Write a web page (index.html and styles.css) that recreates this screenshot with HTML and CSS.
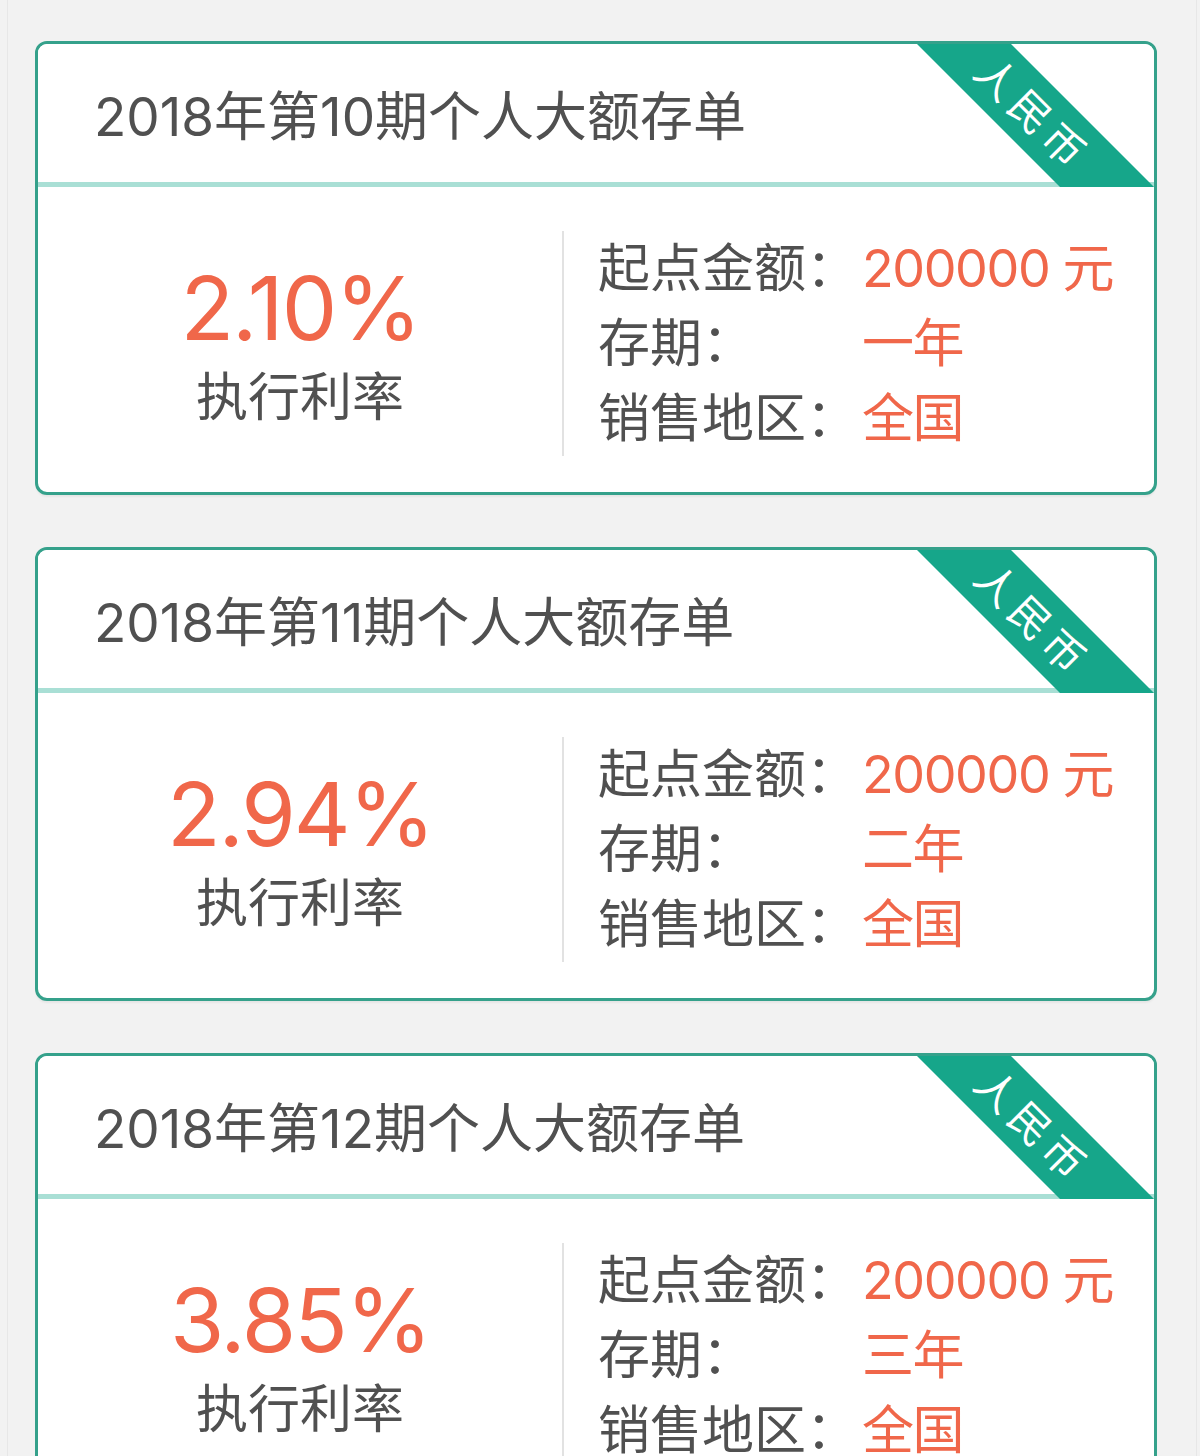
FILE: index.html
```html
<!DOCTYPE html>
<html lang="zh-CN">
<head>
<meta charset="utf-8">
<title>个人大额存单</title>
<link rel="stylesheet" href="styles.css">
</head>
<body>
<div class="page">
  <section class="card">
    <div class="card-top">
      <h2 class="card-title">2018年第10期个人大额存单</h2>
      <div class="ribbon"></div>
      <span class="ribbon-text">人民币</span>
    </div>
    <div class="card-body">
      <div class="rate">
        <div class="rate-value">2.10%</div>
        <div class="rate-label">执行利率</div>
      </div>
      <div class="info">
        <span class="info-label">起点金额：</span><span class="info-value">200000 元</span>
        <span class="info-label">存期：</span><span class="info-value">一年</span>
        <span class="info-label">销售地区：</span><span class="info-value">全国</span>
      </div>
    </div>
  </section>

  <section class="card">
    <div class="card-top">
      <h2 class="card-title">2018年第11期个人大额存单</h2>
      <div class="ribbon"></div>
      <span class="ribbon-text">人民币</span>
    </div>
    <div class="card-body">
      <div class="rate">
        <div class="rate-value">2.94%</div>
        <div class="rate-label">执行利率</div>
      </div>
      <div class="info">
        <span class="info-label">起点金额：</span><span class="info-value">200000 元</span>
        <span class="info-label">存期：</span><span class="info-value">二年</span>
        <span class="info-label">销售地区：</span><span class="info-value">全国</span>
      </div>
    </div>
  </section>

  <section class="card">
    <div class="card-top">
      <h2 class="card-title">2018年第12期个人大额存单</h2>
      <div class="ribbon"></div>
      <span class="ribbon-text">人民币</span>
    </div>
    <div class="card-body">
      <div class="rate">
        <div class="rate-value">3.85%</div>
        <div class="rate-label">执行利率</div>
      </div>
      <div class="info">
        <span class="info-label">起点金额：</span><span class="info-value">200000 元</span>
        <span class="info-label">存期：</span><span class="info-value">三年</span>
        <span class="info-label">销售地区：</span><span class="info-value">全国</span>
      </div>
    </div>
  </section>
</div>
</body>
</html>
```

FILE: styles.css
```css
html, body {
  margin: 0;
  padding: 0;
  background: #f2f2f2;
}

body {
  font-family: "Inter", "Noto Sans CJK SC", "Noto Sans", sans-serif;
  color: #505050;
}

.page {
  margin: 0 3px 0 7px;
  border-left: 1px solid #e7e7e7;
  border-right: 1px solid #e7e7e7;
  padding: 41px 39px 0 27px;
  min-height: 1456px;
  box-sizing: border-box;
}

/* product card */
.card {
  background: #fff;
  border: 3px solid #35a18b;
  border-radius: 12px;
  overflow: hidden;
  margin-bottom: 52px;
  box-shadow: 0 3px 2px -1px rgba(0, 0, 0, 0.05);
}

.card-top {
  position: relative;
  height: 143px;
  display: flex;
  align-items: center;
  padding-top: 8px;
  padding-bottom: 5px;
  box-sizing: border-box;
  background: linear-gradient(to top, #a9dfd5 5px, #fff 5px);
}

.card-title {
  margin: 0;
  padding-left: 56px;
  font-size: 53px;
  font-weight: 400;
  line-height: 1;
  color: #505050;
}

/* diagonal currency band across the top-right corner */
.ribbon {
  position: absolute;
  inset: 0;
  background: #16a68a;
  clip-path: polygon(calc(100% - 237px) 0, calc(100% - 143px) 0, 100% 143px, 100% 100%, calc(100% - 94px) 100%);
}

.ribbon-text {
  position: absolute;
  top: 66px;
  right: 122px;
  transform: translate(50%, -50%) rotate(45deg);
  font-family: "Noto Sans CJK SC", sans-serif;
  color: #fff;
  font-size: 41px;
  line-height: 0.9;
  letter-spacing: 6px;
  padding-left: 6px;
  white-space: nowrap;
}

.card-body {
  display: grid;
  grid-template-columns: 524px 1fr;
  padding: 44px 0 36px;
}

.rate {
  display: flex;
  flex-direction: column;
  align-items: center;
  justify-content: center;
}

.rate-value {
  font-size: 88px;
  line-height: 1;
  letter-spacing: -2px;
  color: #f0674a;
}

.rate-label {
  font-size: 52px;
  line-height: 1;
  margin-top: 20px;
  color: #505050;
}

.info {
  border-left: 2px solid #e2e2e2;
  padding-left: 34px;
  display: grid;
  grid-template-columns: 264px auto;
  grid-auto-rows: 75px;
  align-items: center;
  font-size: 52px;
  line-height: 1;
}

.info-label {
  color: #505050;
}

.info-value {
  color: #f0674a;
  letter-spacing: -1.4px;
}
```
